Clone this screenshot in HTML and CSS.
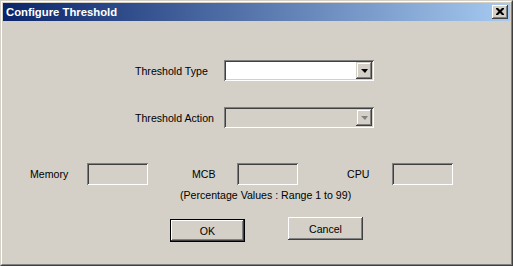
FILE: index.html
```html
<!DOCTYPE html>
<html lang="en">
<head>
    <meta charset="UTF-8">
    <title>Configure Threshold</title>
    <link rel="stylesheet" href="styles.css">
</head>
<body>
    <div class="window">
        <div class="frame">
            <div class="titlebar">
                <span class="title">Configure Threshold</span>
                <button class="close-btn">
                    <svg width="8" height="7" viewBox="0 0 8 7">
                        <path d="M0 0h2l2 2 2-2h2v1l-2.5 2.5 2.5 2.5v1h-2l-2-2-2 2h-2v-1l2.5-2.5-2.5-2.5z" fill="#000"/>
                    </svg>
                </button>
            </div>

            <div class="content">
                <div class="field-row">
                    <label class="field-label">Threshold Type</label>
                    <div class="combo">
                        <div class="combo-text"></div>
                        <div class="combo-btn"><span class="arrow"></span></div>
                    </div>
                </div>

                <div class="field-row row-action">
                    <label class="field-label">Threshold Action</label>
                    <div class="combo disabled">
                        <div class="combo-text"></div>
                        <div class="combo-btn"><span class="arrow"></span></div>
                    </div>
                </div>

                <div class="values-row">
                    <label class="val-label lbl-memory">Memory</label>
                    <div class="textbox"></div>
                    <label class="val-label lbl-mcb">MCB</label>
                    <div class="textbox"></div>
                    <label class="val-label lbl-cpu">CPU</label>
                    <div class="textbox"></div>
                </div>

                <p class="note">(Percentage Values : Range 1 to 99)</p>

                <div class="buttons">
                    <button class="btn btn-default"><span>OK</span></button>
                    <button class="btn"><span>Cancel</span></button>
                </div>
            </div>
        </div>
    </div>
</body>
</html>
```

FILE: styles.css
```css
/* Reset */
body,
p,
button {
    margin: 0;
    padding: 0;
}

body {
    font-family: "Liberation Sans", Arial, sans-serif;
    font-size: 10.6px;
    background-color: #d4d0c8;
    color: #000;
}

/* Window frame */
.window {
    width: 513px;
    height: 266px;
    box-sizing: border-box;
    border: 1px solid;
    border-color: #d4d0c8 #404040 #404040 #d4d0c8;
}

.frame {
    height: 100%;
    box-sizing: border-box;
    border: 1px solid;
    border-color: #fff #808080 #808080 #fff;
    padding: 1px;
    display: flex;
    flex-direction: column;
}

.titlebar {
    height: 18px;
    display: flex;
    align-items: center;
    justify-content: space-between;
    background: linear-gradient(to right, #0a246a, #a6caf0);
    padding: 0 2px 0 3px;
}

.title {
    color: #fff;
    font-weight: bold;
    font-size: 11.3px;
}

.close-btn {
    width: 16px;
    height: 14px;
    box-sizing: border-box;
    background-color: #d4d0c8;
    border: none;
    box-shadow: inset -1px -1px #404040, inset 1px 1px #fff, inset -2px -2px #808080;
    display: flex;
    align-items: center;
    justify-content: center;
    padding: 0 1px 1px 0;
}

.close-btn svg {
    display: block;
}

/* Content */
.content {
    flex: 1;
    background-color: #d4d0c8;
    padding-top: 39px;
}

.field-row {
    display: flex;
    align-items: center;
    padding-left: 132px;
}

.row-action {
    margin-top: 26px;
}

.field-label {
    width: 89px;
}

/* Combo box */
.combo {
    width: 150px;
    height: 21px;
    box-sizing: border-box;
    display: flex;
    align-items: center;
    justify-content: flex-end;
    background-color: #fff;
    padding: 2px;
    box-shadow: inset 1px 1px #808080, inset -1px -1px #fff, inset 2px 2px #404040, inset -2px -2px #d4d0c8;
}

.combo-text {
    flex: 1;
}

.combo-btn {
    width: 16px;
    height: 17px;
    box-sizing: border-box;
    background-color: #d4d0c8;
    box-shadow: inset -1px -1px #404040, inset 1px 1px #d4d0c8, inset -2px -2px #808080, inset 2px 2px #fff;
    display: flex;
    align-items: center;
    justify-content: center;
}

.arrow {
    width: 0;
    height: 0;
    border-left: 4px solid transparent;
    border-right: 3px solid transparent;
    border-top: 4px solid #000;
    margin-top: 1px;
}

.combo.disabled {
    background-color: #d4d0c8;
}

.combo.disabled .arrow {
    border-top-color: #808080;
}

/* Percentage values */
.values-row {
    display: flex;
    align-items: center;
    margin-top: 35px;
    padding-left: 27px;
}

.lbl-memory {
    width: 57px;
}

.lbl-mcb {
    width: 45px;
    margin-left: 44px;
}

.lbl-cpu {
    width: 45px;
    margin-left: 49px;
}

.textbox {
    width: 61px;
    height: 22px;
    box-sizing: border-box;
    background-color: #d4d0c8;
    box-shadow: inset 1px 1px #808080, inset -1px -1px #fff, inset 2px 2px #404040, inset -2px -2px #d4d0c8;
}

.note {
    margin-top: 4px;
    padding-left: 177px;
    line-height: 13px;
}

/* Buttons */
.buttons {
    display: flex;
    align-items: flex-start;
    margin-top: 15px;
    padding-left: 167px;
}

.btn {
    width: 75px;
    height: 23px;
    box-sizing: border-box;
    background-color: #d4d0c8;
    border: none;
    font-family: "Liberation Sans", Arial, sans-serif;
    font-size: 10.6px;
    color: #000;
    box-shadow: inset -1px -1px #404040, inset 1px 1px #fff, inset -2px -2px #808080, inset 2px 2px #d4d0c8;
    margin-left: 43px;
}

.btn-default {
    margin-left: 0;
    margin-top: 2px;
    border: 1px solid #000;
}
```
